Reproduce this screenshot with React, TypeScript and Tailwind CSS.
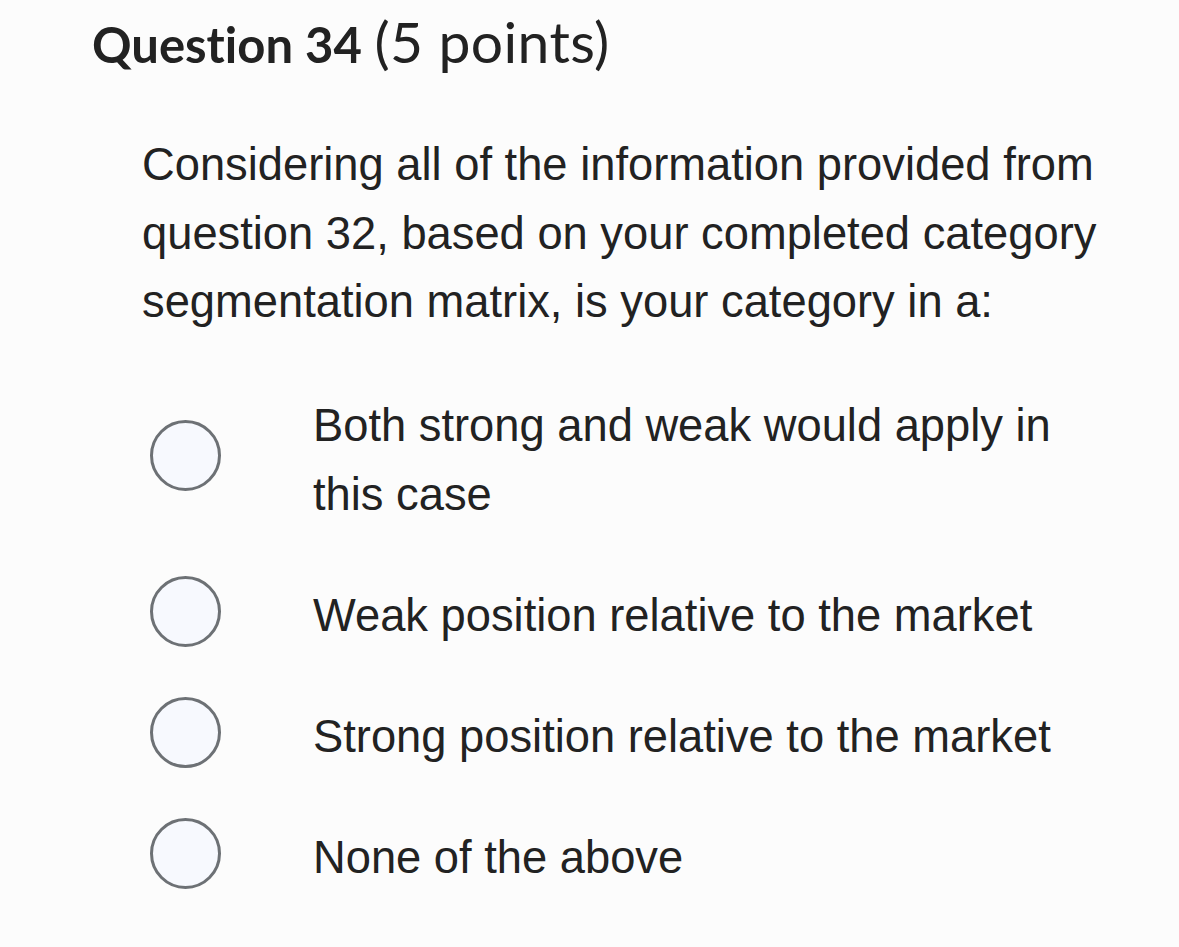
import React from "react";

const options = [
  "Both strong and weak would apply in this case",
  "Weak position relative to the market",
  "Strong position relative to the market",
  "None of the above",
];

function Radio() {
  return (
    <div className="-mt-[12px] -mb-[4px] h-[71px] w-[71px] shrink-0 rounded-full border-[3px] border-[#6d7175] bg-[#f7f9fe]" />
  );
}

export default function App() {
  return (
    <div className="min-h-[947px] w-[1179px] bg-[#fcfcfc] text-[#222222]">
      <h1
        className="pl-[92px] pt-[9px] text-[49px] leading-[70px] [font-variant-ligatures:none]"
        style={{ fontFamily: "Lato, sans-serif" }}
      >
        <span className="font-bold">Question 34</span>{" "}
        <span className="text-[57px] leading-none font-normal tracking-[0.4px]">(5 points)</span>
      </h1>
      <div style={{ fontFamily: "'Liberation Sans', Arial, sans-serif" }}>
        <p className="mt-[52px] pl-[142px] pr-[60px] text-[45.3px] leading-[68.5px]">
          Considering all of the information provided from question 32, based on your
          completed category segmentation matrix, is your category in a:
        </p>
        <div className="mt-[54px] flex flex-col gap-[52px] pl-[150px]">
          {options.map((o, i) => (
            <label key={i} className="flex items-center">
              <Radio />
              <span className="ml-[92px] w-[760px] text-[45.3px] leading-[69px]">{o}</span>
            </label>
          ))}
        </div>
      </div>
    </div>
  );
}
